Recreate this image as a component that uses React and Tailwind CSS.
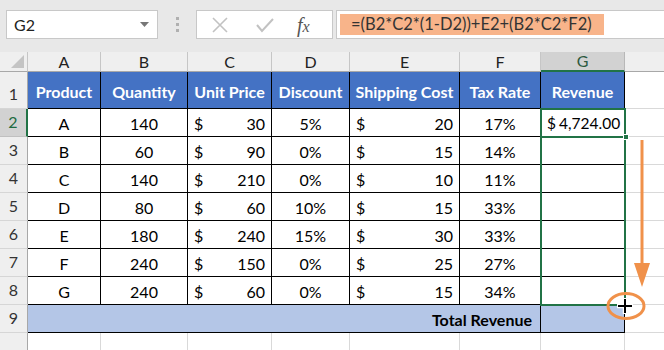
import React from "react";

const rows = [
  ["A", 140, 30, "5%", 20, "17%"],
  ["B", 60, 90, "0%", 15, "14%"],
  ["C", 140, 210, "0%", 10, "11%"],
  ["D", 80, 60, "10%", 15, "33%"],
  ["E", 180, 240, "15%", 30, "33%"],
  ["F", 240, 150, "0%", 25, "27%"],
  ["G", 240, 60, "0%", 15, "34%"],
];

const letters = ["A", "B", "C", "D", "E", "F", "G"];
const headers = ["Product", "Quantity", "Unit Price", "Discount", "Shipping Cost", "Tax Rate", "Revenue"];

function RowHead({ n, active }) {
  return (
    <div
      className={
        "flex items-end justify-center pb-[2px] text-[16px] border-b border-r " +
        (active
          ? "bg-[#d2d2d2] text-[#1e6b41] border-b-[#c0c0c0] border-r-2 border-r-[#217346]"
          : "bg-[#efefef] text-[#333] border-b-[#d6d6d6] border-r-[#a8a8a8]")
      }
    >
      {n}
    </div>
  );
}

function Acct({ v }) {
  return (
    <div className="flex items-center justify-between px-[6px] border-r border-b border-black text-[16px] text-black pt-[2px]">
      <span>$</span>
      <span>{v}</span>
    </div>
  );
}

function Center({ v }) {
  return (
    <div className="flex items-center justify-center border-r border-b border-black text-[16px] text-black pt-[2px]">
      {v}
    </div>
  );
}

export default function App() {
  return (
    <div
      className="relative w-[664px] h-[350px] overflow-hidden bg-white flex flex-col"
      style={{ fontFamily: "Lato, 'Open Sans', sans-serif" }}
    >
      {/* Formula bar */}
      <div className="h-[52px] bg-[#e8e8e8] flex items-start pt-[10px] pl-[6px] shrink-0">
        <div className="w-[152px] h-[29px] bg-white border border-[#c8c8c8] flex items-center justify-between pl-[7px] pr-[8px]">
          <span className="text-[16px] text-[#222]">G2</span>
          <svg width="9" height="5" viewBox="0 0 9 5">
            <path d="M0 0 L9 0 L4.5 5 Z" fill="#777" />
          </svg>
        </div>
        <div className="w-[38px] h-[29px] flex flex-col items-center justify-center gap-[3px]">
          <span className="w-[3px] h-[3px] bg-[#b0b0b0]" />
          <span className="w-[3px] h-[3px] bg-[#b0b0b0]" />
          <span className="w-[3px] h-[3px] bg-[#b0b0b0]" />
        </div>
        <div className="w-[137px] h-[29px] bg-white border border-[#c8c8c8] flex items-center pl-[14px]">
          <svg width="18" height="18" viewBox="0 0 18 18">
            <path d="M2 2 L16 16 M16 2 L2 16" stroke="#c2c2c2" strokeWidth="1.6" />
          </svg>
          <svg width="20" height="18" viewBox="0 0 20 18" className="ml-[26px]">
            <path d="M2 9 L7 15 L18 3" stroke="#c2c2c2" strokeWidth="2" fill="none" />
          </svg>
          <span
            className="ml-[22px] text-[20px] italic text-[#555] leading-none"
            style={{ fontFamily: "'Liberation Serif', serif" }}
          >
            f<span className="text-[16px]">x</span>
          </span>
        </div>
        <div className="ml-[3px] flex-1 h-[29px] bg-white border border-[#c8c8c8] border-r-0 flex items-center pl-[3px]">
          <div className="w-[264px] h-[21px] bg-[#f8b48a] flex items-center pl-[11px] text-[16.5px] text-[#333]">
            =(B2*C2*(1-D2))+E2+(B2*C2*F2)
          </div>
        </div>
      </div>

      {/* Sheet */}
      <div className="grid grid-cols-[28px_73px_87px_84px_78px_110px_81px_84px_1fr] grid-rows-[20px_37px_repeat(8,28px)_1fr] flex-1">
        <div className="bg-[#efefef] border-r border-b border-r-[#c6c6c6] border-b-[#a8a8a8] relative">
          <svg className="absolute right-[3px] bottom-[3px]" width="13" height="13" viewBox="0 0 13 13">
            <path d="M13 0 L13 13 L0 13 Z" fill="#c4c4c4" />
          </svg>
        </div>
        {letters.map((l) =>
          l === "G" ? (
            <div
              key={l}
              className="bg-[#d2d2d2] border-b-2 border-b-[#217346] border-r border-r-[#b8b8b8] flex items-center justify-center text-[16px] text-[#2d5a40]"
            >
              {l}
            </div>
          ) : (
            <div
              key={l}
              className="bg-[#efefef] border-b border-b-[#a8a8a8] border-r border-r-[#c6c6c6] flex items-center justify-center text-[16px] text-[#222]"
            >
              {l}
            </div>
          )
        )}
        <div className="bg-[#efefef] border-b border-b-[#a8a8a8]" />

        <RowHead n={1} />
        {headers.map((h) => (
          <div
            key={h}
            className="bg-[#4472c4] border-r border-b border-black flex items-center justify-center text-white font-bold text-[16px] pt-[3px]"
          >
            {h}
          </div>
        ))}
        <div className="border-b border-[#d9d9d9]" />

        {rows.map((r, i) => (
          <React.Fragment key={i}>
            <RowHead n={i + 2} active={i === 0} />
            <Center v={r[0]} />
            <Center v={r[1]} />
            <Acct v={r[2]} />
            <Center v={r[3]} />
            <Acct v={r[4]} />
            <Center v={r[5]} />
            {i === 0 ? (
              <div className="flex items-center gap-[3px] pl-[6px] border-r border-b border-black text-[15.5px] text-black pt-[2px] whitespace-nowrap">
                <span>$</span>
                <span>4,724.00</span>
              </div>
            ) : (
              <div className="border-r border-b border-black" />
            )}
            <div className="border-b border-[#d9d9d9]" />
          </React.Fragment>
        ))}

        <RowHead n={9} />
        <div className="col-span-6 bg-[#b4c6e7] border-r border-b border-black flex items-center justify-end pr-[8px] font-bold text-[16px] text-black pt-[2px]">
          Total Revenue
        </div>
        <div className="bg-[#b4c6e7] border-r border-b border-black" />
        <div className="border-b border-[#d9d9d9]" />

        <div className="bg-[#efefef] border-r border-r-[#a8a8a8]" />
        {letters.map((l) => (
          <div key={l} className="border-r border-[#d9d9d9]" />
        ))}
        <div />
      </div>

      {/* Selection outline G2:G8 */}
      <div className="absolute left-[540px] top-[108px] w-[86px] h-[198px] border-2 border-[#217346] pointer-events-none" />
      <div className="absolute left-[540px] top-[136px] w-[86px] h-[2px] bg-[#217346]" />
      <div className="absolute left-[623px] top-[134px] w-[6px] h-[6px] bg-[#217346] border border-white" />

      {/* Arrow, ellipse, cursor */}
      <svg className="absolute left-0 top-0 pointer-events-none" width="664" height="350" viewBox="0 0 664 350">
        <line x1="642" y1="140" x2="642" y2="266" stroke="#f0914a" strokeWidth="3" />
        <path d="M634 263 L650 263 L642 287 Z" fill="#f0914a" />
        <ellipse cx="626" cy="306" rx="18" ry="12.5" fill="none" stroke="#f0914a" strokeWidth="3" />
        <path d="M625 298 L625 314 M617 306 L633 306" stroke="#fff" strokeWidth="4.5" />
        <path d="M625 299 L625 313 M618 306 L632 306" stroke="#000" strokeWidth="2" />
      </svg>
    </div>
  );
}
